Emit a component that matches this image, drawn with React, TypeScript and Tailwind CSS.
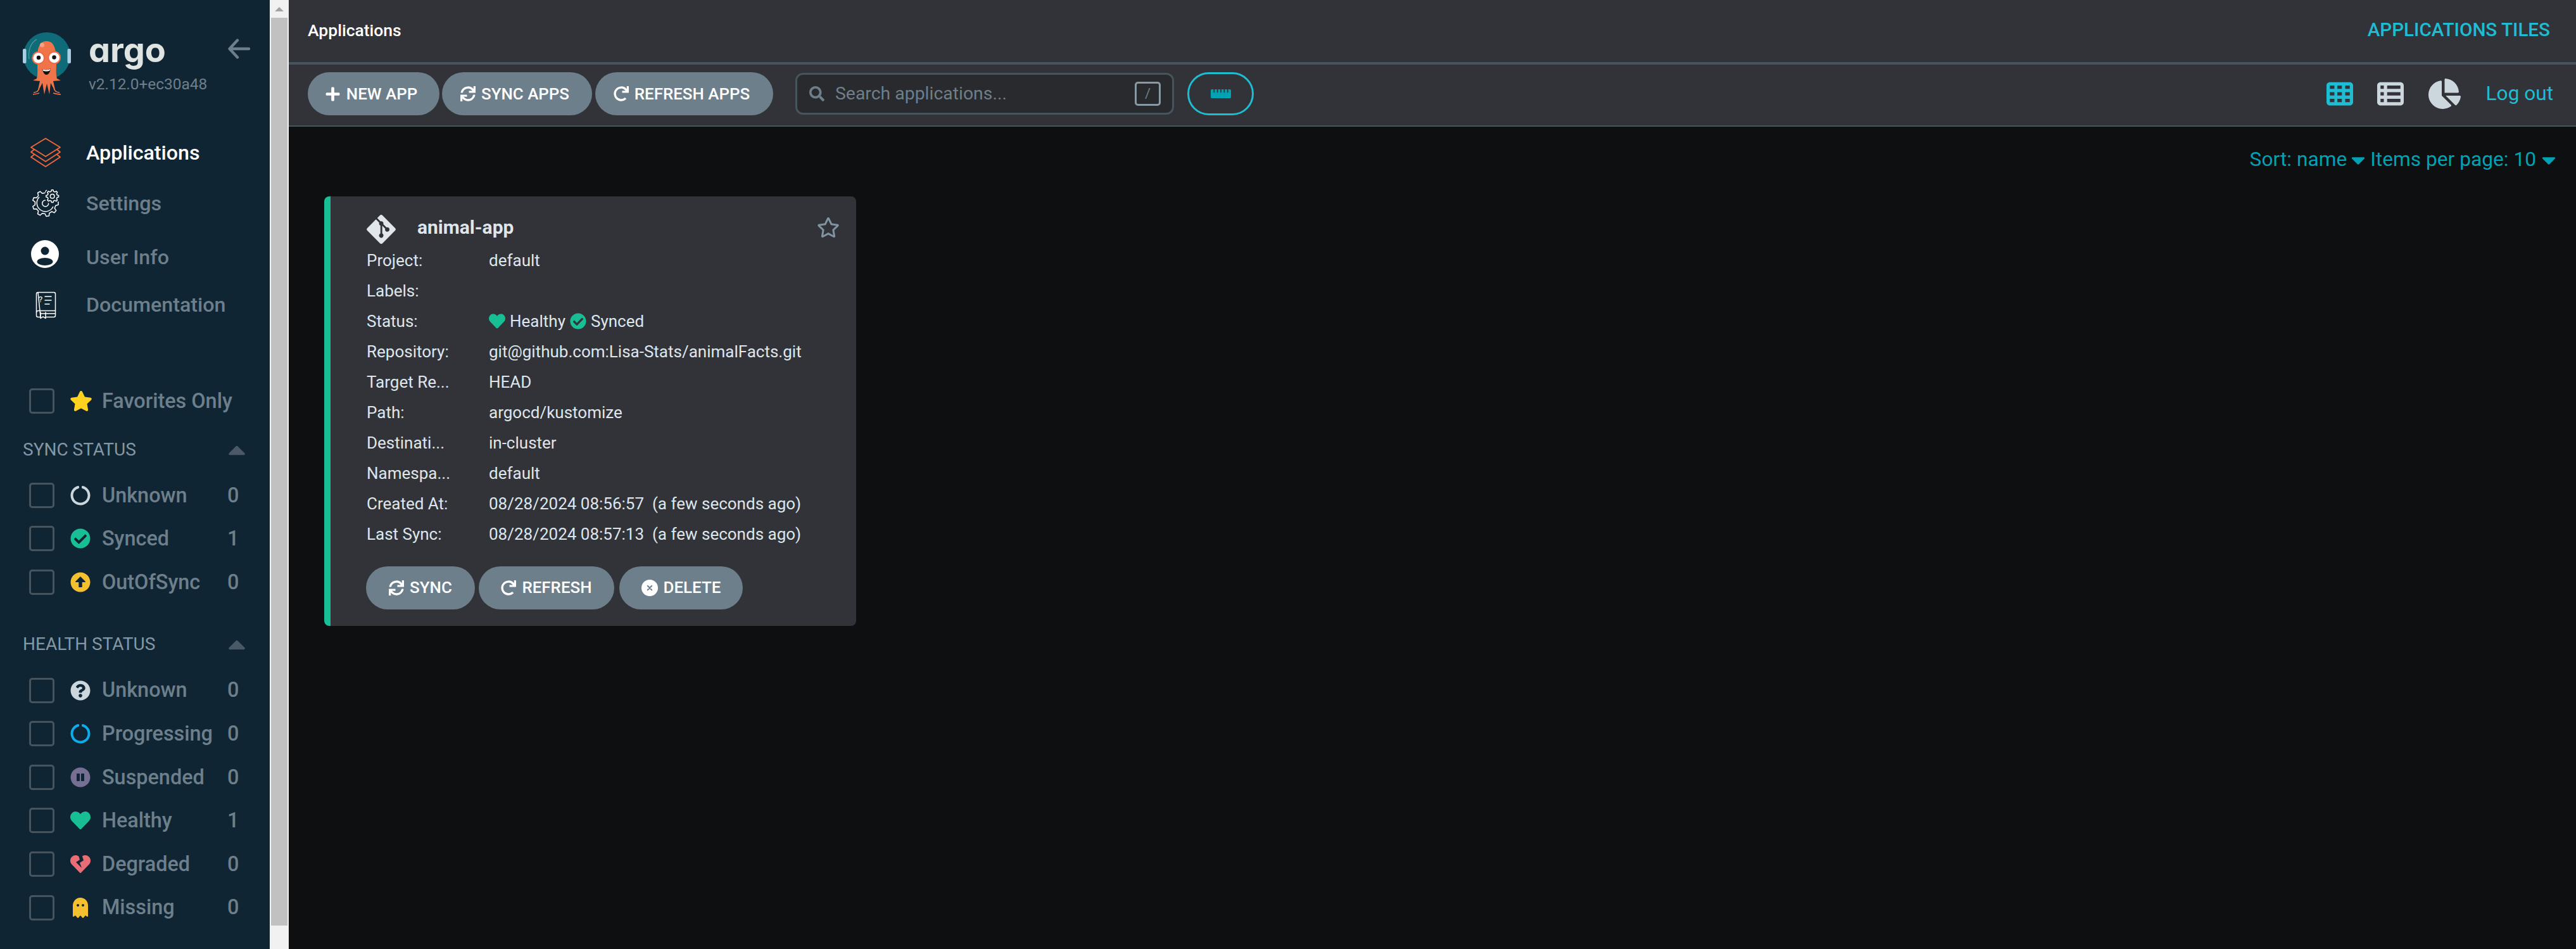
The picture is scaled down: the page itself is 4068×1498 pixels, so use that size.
import React from 'react';
import {
  FaStar, FaRegStar, FaCircleNotch, FaCheckCircle, FaArrowAltCircleUp, FaQuestionCircle, FaPauseCircle,
  FaHeart, FaHeartBroken, FaGhost, FaCaretUp, FaCaretDown, FaPlus, FaSync, FaRedo, FaSearch, FaRulerHorizontal,
  FaChartPie, FaGitAlt,
} from 'react-icons/fa';
import { FaTableCells, FaTableList } from 'react-icons/fa6';

function gearPath(cx: number, cy: number, ro: number, ri: number, n: number) {
  let d = '';
  for (let i = 0; i < n; i++) {
    const step = (Math.PI * 2) / n;
    const a = i * step;
    const pts: [number, number][] = [
      [a - step * 0.3, ri], [a - step * 0.16, ro], [a + step * 0.16, ro], [a + step * 0.3, ri],
    ];
    pts.forEach(([t, r], j) => {
      const x = (cx + Math.cos(t) * r).toFixed(2);
      const y = (cy + Math.sin(t) * r).toFixed(2);
      d += `${i === 0 && j === 0 ? 'M' : 'L'}${x} ${y} `;
    });
  }
  return d + 'Z';
}

function Logo() {
  return (
    <svg viewBox="36 47 76 104" className="w-[76px] h-[104px] shrink-0">
      <circle cx="74" cy="88" r="37" fill="#0f6b78" />
      <path d="M46 93C44 80 48 68 58 62" fill="none" stroke="#5d9aa3" strokeWidth="1.2" />
      <rect x="36" y="77" width="5.5" height="23" rx="2" fill="#a9cde3" />
      <rect x="106.5" y="77" width="5.5" height="23" rx="2" fill="#a9cde3" />
      <path d="M59 98C58 74 63 65 73.5 65C84 65 89 74 89 98C89 108 88 118 90 124L96 127L84 128L88 146L80 131L78 149L74 132L70 149L67 131L59 146L63 128L52 127L58 124C60 118 59 108 59 98Z" fill="#f0744a" />
      <path d="M62 147C58 148 55 149 52 149M84 147C88 148 92 149 96 149M62 140C60 144 56 146 53 146M85 140C87 144 91 146 94 146" fill="none" stroke="#f0744a" strokeWidth="1.5" />
      <circle cx="66.5" cy="71" r="3.5" fill="#f6a184" />
      <circle cx="60.7" cy="91.5" r="10.5" fill="#ee6a42" />
      <circle cx="85.7" cy="91" r="10.5" fill="#ee6a42" />
      <circle cx="60.7" cy="91.5" r="8.3" fill="#fff" />
      <circle cx="85.7" cy="91" r="8.3" fill="#fff" />
      <circle cx="61" cy="91" r="3.2" fill="#111" />
      <circle cx="85.5" cy="90.5" r="3.2" fill="#111" />
      <path d="M67 109C72 111 76 111 80 108C79 115 76 118 73 118C70 118 68 114 67 109Z" fill="#111" />
      <path d="M67.5 109.2C72 111 76 111 79.7 108.5L79 111C76 113 71 113 68 111.5Z" fill="#fff" />
    </svg>
  );
}

function LayersIcon() {
  return (
    <svg viewBox="47 217 50 50" className="w-[50px] h-[50px]" fill="none" stroke="#f4683b" strokeWidth="1.8" strokeLinejoin="round">
      <path d="M72 219.5L95 233.5L72 248L49 233.5Z" />
      <path d="M54 237L49 241L72 256L95 241L90 237" />
      <path d="M54 245L49 249L72 264L95 249L90 245" />
    </svg>
  );
}

function GearsIcon() {
  return (
    <svg viewBox="47 297 50 50" className="w-[50px] h-[50px]" fill="none" stroke="#fff" strokeWidth="1.5" strokeLinejoin="round">
      <path d={gearPath(71.7, 322, 20.5, 16.5, 9)} />
      <path d="M62 312A13.5 13.5 0 1 0 84 327" />
      <circle cx="71.7" cy="322" r="5" />
      <circle cx="82.7" cy="310.7" r="12.5" fill="#102533" stroke="none" />
      <path d={gearPath(82.7, 310.7, 10, 7.8, 8)} fill="#102533" />
      <circle cx="82.7" cy="310.7" r="3.3" />
    </svg>
  );
}

function UserIcon() {
  return (
    <svg viewBox="48 377 48 48" className="w-[48px] h-[48px] mb-[10px]">
      <circle cx="72" cy="401" r="22" fill="#fff" />
      <circle cx="72" cy="396" r="6.5" fill="#102533" />
      <ellipse cx="72" cy="413" rx="12.5" ry="6" fill="#102533" />
    </svg>
  );
}

function BookIcon() {
  return (
    <svg viewBox="52 458 40 46" className="w-[40px] h-[46px] ml-[5px]" fill="none" stroke="#fff" strokeWidth="1.5" strokeLinecap="round" strokeLinejoin="round">
      <path d="M60 461.5H85A2.5 2.5 0 0 1 87.5 464V498A2.5 2.5 0 0 1 85 500.5H72M64 500.5H60C58.5 500.5 57.5 499.5 57.5 498V464C57.5 462.5 58.5 461.5 60 461.5Z" />
      <path d="M57.5 493C58 491 59 490.5 60 490.5H87.5M64 495H87.5" />
      <path d="M64 493V502.5L68 499.8L72 502.5V493" />
      <path d="M71 468H81M71 474H81M71 480H78" />
      <text x="61" y="477" fontSize="13" fill="#fff" stroke="none" fontFamily="Roboto, sans-serif">?</text>
    </svg>
  );
}

function DeleteIcon() {
  return (
    <svg viewBox="0 0 26 26" className="w-[26px] h-[26px] shrink-0">
      <circle cx="13" cy="13" r="13" fill="#fff" />
      <path d="M9.8 9.8L16.2 16.2M16.2 9.8L9.8 16.2" fill="none" stroke="#6d7f8b" strokeWidth="2" strokeLinecap="round" />
    </svg>
  );
}

function NavItem({ icon, label, active, className }: { icon: React.ReactNode; label: string; active?: boolean; className: string }) {
  return (
    <div className={`flex items-center h-[60px] ${className}`}>
      <div className="w-[136px] pl-[47px] flex items-center">{icon}</div>
      <span className={`text-[32.2px] font-medium leading-none ${active ? 'text-white' : 'text-[#6d7f8b]'}`}>{label}</span>
    </div>
  );
}

function CheckBox() {
  return <span className="block w-[40px] h-[40px] border-[3px] border-[#46545e] rounded-[5px] shrink-0" />;
}

function FilterRow({ icon, label, count }: { icon: React.ReactNode; label: string; count?: number }) {
  return (
    <div className="flex items-center h-[68.6px] pl-[46px]">
      <CheckBox />
      <div className="w-[75px] pl-[24px] flex items-center">{icon}</div>
      <span className="text-[32.4px] font-medium text-[#6d7f8b] leading-none flex-1 whitespace-nowrap">{label}</span>
      {count !== undefined && <span className="text-[32.4px] font-medium text-[#6d7f8b] leading-none w-[67px]">{count}</span>}
    </div>
  );
}

function IconBox({ children }: { children: React.ReactNode }) {
  return <span className="w-[33px] flex justify-center">{children}</span>;
}

function SectionHead({ label, className }: { label: string; className: string }) {
  return (
    <div className={`flex items-center pl-[36px] pr-[38px] ${className}`}>
      <span className="flex-1 text-[28px] text-[#8497a3] leading-none">{label}</span>
      <FaCaretUp className="w-[28px] h-[44px] text-[#4b5966]" />
    </div>
  );
}

function PillButton({ icon, label, className }: { icon: React.ReactNode; label: string; className: string }) {
  return (
    <button className={`flex items-center justify-center gap-[9px] h-[68px] rounded-[34px] bg-[#6d7f8b] text-white text-[25.9px] font-medium whitespace-nowrap ${className}`}>
      {icon}
      <span>{label}</span>
    </button>
  );
}

const rows: [string, React.ReactNode][] = [
  ['Project:', 'default'],
  ['Labels:', ''],
  ['Status:', (
    <span className="flex items-center">
      <FaHeart className="w-[26px] h-[26px] text-[#18be94] mr-[7px]" />
      <span>Healthy</span>
      <FaCheckCircle className="w-[26px] h-[26px] text-[#18be94] mx-[7px]" />
      <span>Synced</span>
    </span>
  )],
  ['Repository:', 'git@github.com:Lisa-Stats/animalFacts.git'],
  ['Target Re...', 'HEAD'],
  ['Path:', 'argocd/kustomize'],
  ['Destinati...', 'in-cluster'],
  ['Namespa...', 'default'],
  ['Created At:', '08/28/2024 08:56:57\u00a0\u00a0(a few seconds ago)'],
  ['Last Sync:', '08/28/2024 08:57:13\u00a0\u00a0(a few seconds ago)'],
];

export default function App() {
  return (
    <div className="flex w-[4068px] h-[1498px] overflow-hidden bg-[#0e0f10] font-[Roboto,sans-serif]">
      <aside className="w-[426px] h-full bg-[#102533] flex flex-col shrink-0">
        <div className="flex pl-[36px] pt-[47px] h-[150px] shrink-0">
          <Logo />
          <div className="ml-[28px] flex flex-col w-[190px] shrink-0">
            <span className="font-[Inter,sans-serif] [font-feature-settings:'cv11'] font-bold text-[54px] leading-[56px] h-[64px] mt-[4px] text-[#dfe3e2]">argo</span>
            <span className="text-[24.4px] leading-none text-[#6d7f8b] mt-[6px] whitespace-nowrap">v2.12.0+ec30a48</span>
          </div>
          <svg viewBox="0 0 36 32" className="w-[36px] h-[32px] ml-[30px] mt-[14px]" fill="none" stroke="#6d7f8b" strokeWidth="4.4" strokeLinecap="round" strokeLinejoin="round">
            <path d="M15 2.5L2.5 16L15 29.5M3 16H33" />
          </svg>
        </div>
        <NavItem className="mt-[61px]" active icon={<LayersIcon />} label="Applications" />
        <NavItem className="mt-[20px]" icon={<GearsIcon />} label="Settings" />
        <NavItem className="mt-[25px]" icon={<UserIcon />} label="User Info" />
        <NavItem className="mt-[15px]" icon={<BookIcon />} label="Documentation" />
        <div className="mt-[88px]">
          <FilterRow icon={<FaStar className="w-[36px] h-[32px] text-[#ffd21f]" />} label="Favorites Only" />
          <SectionHead label="SYNC STATUS" className="h-[80px] pt-[4px]" />
          <FilterRow icon={<IconBox><FaCircleNotch className="w-[32px] h-[32px] text-[#ccd6dd]" /></IconBox>} label="Unknown" count={0} />
          <FilterRow icon={<IconBox><FaCheckCircle className="w-[32px] h-[32px] text-[#18be94]" /></IconBox>} label="Synced" count={1} />
          <FilterRow icon={<IconBox><FaArrowAltCircleUp className="w-[32px] h-[32px] text-[#f4c030]" /></IconBox>} label="OutOfSync" count={0} />
          <SectionHead label="HEALTH STATUS" className="h-[102px] pt-[26px]" />
          <FilterRow icon={<IconBox><FaQuestionCircle className="w-[32px] h-[32px] text-[#ccd6dd]" /></IconBox>} label="Unknown" count={0} />
          <FilterRow icon={<IconBox><FaCircleNotch className="w-[32px] h-[32px] text-[#0dadea]" /></IconBox>} label="Progressing" count={0} />
          <FilterRow icon={<IconBox><FaPauseCircle className="w-[32px] h-[32px] text-[#766f94]" /></IconBox>} label="Suspended" count={0} />
          <FilterRow icon={<IconBox><FaHeart className="w-[32px] h-[32px] text-[#18be94]" /></IconBox>} label="Healthy" count={1} />
          <FilterRow icon={<IconBox><FaHeartBroken className="w-[32px] h-[32px] text-[#e96d76]" /></IconBox>} label="Degraded" count={0} />
          <FilterRow icon={<IconBox><FaGhost className="w-[26px] h-[32px] text-[#f4c030]" /></IconBox>} label="Missing" count={0} />
        </div>
      </aside>

      <div className="w-[30px] h-full bg-[#f1f1f1] shrink-0 flex flex-col items-center">
        <div className="h-[28px] flex items-center justify-center shrink-0">
          <span className="block w-0 h-0 border-x-[7px] border-x-transparent border-b-[7px] border-b-[#a3a3a3]" />
        </div>
        <div className="w-[26px] h-[1433px] bg-[#c1c1c1]" />
      </div>

      <main className="flex-1 min-w-0 flex flex-col">
        <header className="h-[98px] bg-[#323339] flex items-center justify-between pl-[30px] pr-[41px] pb-[2px] shrink-0">
          <span className="text-white text-[26.5px] font-medium leading-none">Applications</span>
          <span className="text-[#1fbdd2] text-[29.6px] font-medium leading-none">APPLICATIONS TILES</span>
        </header>
        <div className="h-[102px] bg-[#323339] border-t-[4px] border-b-[2px] border-[#46545e] flex items-center pl-[30px] pr-[36px] pb-[4px] shrink-0">
          <PillButton className="w-[208px] pr-[8px]" icon={<FaPlus className="w-[25px] h-[25px]" />} label="NEW APP" />
          <PillButton className="w-[237px] ml-[4px] pr-[7px]" icon={<FaSync className="w-[24px] h-[24px]" />} label="SYNC APPS" />
          <PillButton className="w-[281px] ml-[5px] pr-[8px]" icon={<FaRedo className="w-[24px] h-[24px]" />} label="REFRESH APPS" />
          <div className="w-[598px] h-[66px] ml-[35px] bg-[#292a2d] border-[3px] border-[#46545e] rounded-[12px] flex items-center pl-[19px] pr-[18px]">
            <FaSearch className="w-[24px] h-[24px] text-[#6d7f8b]" />
            <span className="ml-[17px] flex-1 text-[28.4px] text-[#6d7f8b] leading-none">Search applications...</span>
            <span className="w-[41px] h-[38px] border-[3px] border-[#8a9aa4] rounded-[5px] flex items-center justify-center text-[22px] text-[#6d7f8b] leading-none">/</span>
          </div>
          <button className="w-[105px] h-[68px] ml-[21px] rounded-[34px] border-[3px] border-[#1fbdd2] flex items-center justify-center">
            <FaRulerHorizontal className="w-[32px] h-[32px] text-[#00a2b3]" />
          </button>
          <div className="ml-auto flex items-center">
            <FaTableCells className="w-[48px] h-[42px] text-[#1fbdd2]" />
            <FaTableList className="w-[48px] h-[42px] text-[#ccd6dd] ml-[32px]" />
            <FaChartPie className="w-[51px] h-[48px] text-[#ccd6dd] ml-[36px]" />
            <span className="text-[#1fbdd2] text-[31.6px] leading-none ml-[40px]">Log out</span>
          </div>
        </div>

        <div className="flex-1 min-h-0 flex flex-col">
          <div className="flex items-center justify-end h-[48px] mt-[28px] pr-[32px] text-[#00a2b3] text-[31.7px] leading-none shrink-0">
            <span>Sort: name</span>
            <FaCaretDown className="w-[22px] h-[35px] ml-[7px]" />
            <span className="ml-[8px]">Items per page: 10</span>
            <FaCaretDown className="w-[22px] h-[35px] ml-[9px]" />
          </div>
          <article className="w-[840px] h-[678px] ml-[56px] mt-[34px] bg-[#323339] border-l-[10px] border-[#18be94] rounded-[8px] pl-[57px] pr-[26px] pt-[28px] text-[#dee6eb] text-[26px] leading-none shrink-0">
            <div className="flex items-center h-[48px] -ml-[3px]">
              <FaGitAlt className="w-[52px] h-[52px] text-[#e1e6eb] shrink-0" />
              <span className="ml-[31px] flex-1 text-[30px] font-bold leading-none pb-[6px]">animal-app</span>
              <FaRegStar className="w-[36px] h-[32px] mb-[6px] text-[#7f94a3]" />
            </div>
            <div className="mt-[1px]">
              {rows.map(([k, v]) => (
                <div key={k} className="flex items-center h-[48px] whitespace-nowrap">
                  <span className="w-[193px] shrink-0">{k}</span>
                  <span>{v}</span>
                </div>
              ))}
            </div>
            <div className="flex mt-[27px] -ml-[1px]">
              <PillButton className="w-[172px]" icon={<FaSync className="w-[24px] h-[24px]" />} label="SYNC" />
              <PillButton className="w-[214px] ml-[6px]" icon={<FaRedo className="w-[24px] h-[24px]" />} label="REFRESH" />
              <PillButton className="w-[195px] ml-[8px]" icon={<DeleteIcon />} label="DELETE" />
            </div>
          </article>
        </div>
      </main>
    </div>
  );
}
